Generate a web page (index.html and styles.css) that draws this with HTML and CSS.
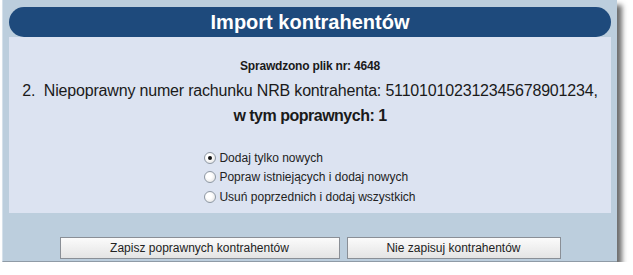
FILE: index.html
```html
<!DOCTYPE html>
<html lang="pl">
<head>
  <meta charset="UTF-8" />
  <title>Import kontrahentów</title>
  <link rel="stylesheet" href="styles.css">
</head>
<body>
  <div class="window">
    <h1 class="title">Import kontrahentów</h1>

    <div class="panel">
      <p class="info">Sprawdzono plik nr: 4648</p>
      <p class="line">2.&nbsp; Niepoprawny numer rachunku NRB kontrahenta: 51101010231234567890123&#8203;4,</p>
      <p class="line strong">w tym poprawnych: 1</p>

      <div class="options">
        <label class="option"><input type="radio" name="mode" checked /> Dodaj tylko nowych</label>
        <label class="option"><input type="radio" name="mode" /> Popraw istniejących i dodaj nowych</label>
        <label class="option"><input type="radio" name="mode" /> Usuń poprzednich i dodaj wszystkich</label>
      </div>
    </div>

    <div class="buttons">
      <button class="btn wide">Zapisz poprawnych kontrahentów</button>
      <button class="btn">Nie zapisuj kontrahentów</button>
    </div>
  </div>
</body>
</html>
```

FILE: styles.css
```css
body {
  margin: 0;
  background: #fff;
  font-family: "Liberation Sans", Arial, sans-serif;
  color: #1a1a1a;
}
.window {
  width: 615px;
  height: 262px;
  margin-left: 2px;
  padding: 7px 0 0 6px;
  box-sizing: border-box;
  background: #bccedd;
  border-left: 1px solid #d4e0ea;
  border-bottom: 1px solid #8f9ba6;
  box-shadow: 5px 5px 5px rgba(60, 60, 60, 0.75);
}
.title {
  width: 602px;
  height: 30px;
  margin: 0;
  border-radius: 15px;
  background: #1e4a7c;
  color: #fff;
  font-size: 20px;
  line-height: 30px;
  text-align: center;
}
.panel {
  width: 602px;
  height: 176px;
  padding-top: 22px;
  box-sizing: border-box;
  background: #dce3f1;
  text-align: center;
}
.panel p {
  margin: 0;
}
.info {
  font-size: 12px;
  font-weight: bold;
  letter-spacing: -0.2px;
  line-height: 14px;
}
.line {
  font-size: 16px;
  letter-spacing: -0.18px;
  line-height: 24px;
  margin-top: 6px !important;
}
.line.strong {
  font-weight: bold;
  letter-spacing: -0.5px;
  margin-top: 1px !important;
}
.options {
  display: inline-block;
  margin-top: 20px;
  text-align: left;
}
.option {
  display: flex;
  align-items: center;
  height: 19.5px;
  font-size: 12px;
  color: #222;
}
.option input {
  appearance: none;
  width: 12px;
  height: 12px;
  margin: 0 3px 0 0;
  border: 1px solid #8e98a4;
  border-radius: 50%;
  background: radial-gradient(circle at 40% 40%, #fff 30%, #dcdcdc 100%);
  position: relative;
}
.option input:checked::after {
  content: "";
  position: absolute;
  left: 3px;
  top: 3px;
  width: 4px;
  height: 4px;
  border-radius: 50%;
  background: #111;
}
.buttons {
  width: 602px;
  display: flex;
  justify-content: center;
  gap: 7px;
  margin-top: 24px;
}
.btn {
  width: 214px;
  height: 22px;
  padding: 0;
  font-family: "Liberation Sans", Arial, sans-serif;
  font-size: 12px;
  color: #222;
  background: linear-gradient(#fbfbfb, #e4e4e4);
  border: 1px solid #8a8f96;
  border-radius: 0;
}
.btn.wide {
  width: 280px;
}
```
